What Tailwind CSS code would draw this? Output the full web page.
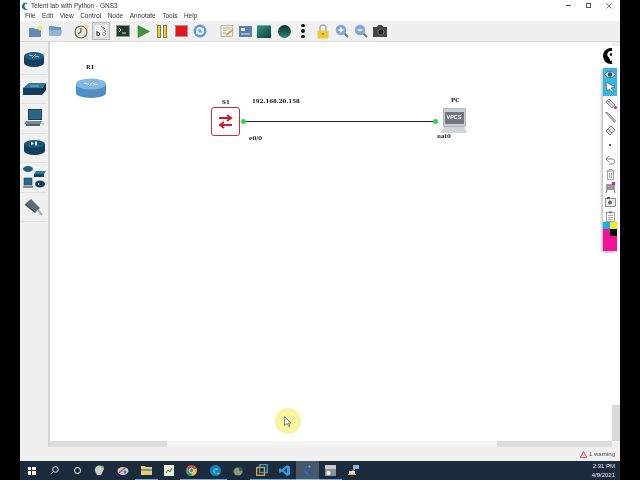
<!DOCTYPE html>
<html lang="en">
<head>
  <meta charset="UTF-8">
  <title>Telent lab with Python - GNS3</title>
  <script src="https://cdn.jsdelivr.net/npm/@tailwindcss/browser@4"></script>
</head>
<body class="w-[640px] h-[480px] overflow-hidden bg-black font-['Liberation_Sans',sans-serif]">
<div class="ml-[20px] w-[600px] h-[480px] flex flex-col bg-[#f0f0f0] relative blur-[0.35px]">

  <!-- title bar -->
  <div class="h-[11px] bg-white flex items-center text-[6.5px] text-[#333]">
    <svg class="ml-[1px] mt-[1px]" width="8" height="9" viewBox="0 0 8 9"><path d="M6 1 A3.6 3.6 0 1 0 7 7 A3 3 0 0 1 6 1Z" fill="#2b5f9e"/><circle cx="5.5" cy="1.5" r="1" fill="#58a0d8"/></svg>
    <span class="ml-[2px]">Telent lab with Python - GNS3</span>
    <div class="ml-auto flex items-center gap-[15px] pr-[8px] text-[#444]">
      <div class="w-[5px] h-px bg-[#555]"></div>
      <div class="w-[5px] h-[5px] border border-[#555]"></div>
      <svg width="6" height="6" viewBox="0 0 6 6"><path d="M0.5 0.5 L5.5 5.5 M5.5 0.5 L0.5 5.5" stroke="#555" stroke-width="0.8"/></svg>
    </div>
  </div>

  <!-- menu -->
  <div class="h-[10px] bg-white flex items-center text-[6.5px] text-[#333] pl-[5px] gap-[6.5px]">
    <span>File</span><span>Edit</span><span>View</span><span>Control</span><span>Node</span><span>Annotate</span><span>Tools</span><span>Help</span>
  </div>

  <!-- toolbar -->
  <div class="h-[21px] bg-[#f0f0f0] border-b border-[#d8d8d8] flex items-center pl-[6px]">
    <div class="w-[18px] h-[18px] flex items-center justify-center">
      <svg width="15" height="13" viewBox="0 0 15 13"><path d="M1 3h5l1 1h6v8H1z" fill="#5f8db8"/><circle cx="12" cy="3" r="2.4" fill="#f3e26a"/></svg>
    </div>
    <div class="w-[18px] h-[18px] flex items-center justify-center ml-[2px]">
      <svg width="15" height="12" viewBox="0 0 15 12"><path d="M1 1h5l1 1h6v9H1z" fill="#6a95bd"/><path d="M1 5h13l-1 6H1z" fill="#8fb4d6"/></svg>
    </div>
    <div class="w-[18px] h-[18px] flex items-center justify-center ml-[8px]">
      <svg width="15" height="15" viewBox="0 0 15 15"><circle cx="7" cy="8" r="6" fill="#e8e4d2" stroke="#666" stroke-width="1.2"/><path d="M7 4v4l-3 2" fill="none" stroke="#333" stroke-width="1"/><circle cx="12.5" cy="2.5" r="2" fill="#f3e26a"/></svg>
    </div>
    <div class="w-[18px] h-[18px] flex items-center justify-center ml-[2px] bg-[#dcdcdc] border border-[#bbb]">
      <svg width="14" height="14" viewBox="0 0 14 14"><rect x="1" y="1" width="12" height="12" fill="#f2f2f2"/><text x="2" y="12" font-size="7" font-weight="bold" fill="#222">b</text><path d="M7 2l5 6M9 3l2 2" stroke="#777" stroke-width="1"/><circle cx="10" cy="10" r="1.5" fill="none" stroke="#777" stroke-width="0.7"/></svg>
    </div>
    <div class="w-[18px] h-[18px] flex items-center justify-center ml-[4px]">
      <svg width="14" height="12" viewBox="0 0 14 12"><rect x="0.5" y="0.5" width="13" height="11" fill="#1d3a2a" stroke="#8a9a8a"/><path d="M3 3l2 2-2 2M6 8h4" stroke="#fff" stroke-width="0.9" fill="none"/></svg>
    </div>
    <div class="w-[18px] h-[18px] flex items-center justify-center ml-[2px]">
      <svg width="13" height="13" viewBox="0 0 13 13"><path d="M1 0.5 L12.5 6.5 L1 12.5Z" fill="#3d9a3a" stroke="#2b7a30" stroke-width="0.6"/></svg>
    </div>
    <div class="w-[18px] h-[18px] flex items-center justify-center ml-[1px] gap-[2px]">
      <div class="w-[4px] h-[13px] bg-[#f2d40c] border border-[#777]"></div>
      <div class="w-[4px] h-[13px] bg-[#f2d40c] border border-[#777]"></div>
    </div>
    <div class="w-[18px] h-[18px] flex items-center justify-center ml-[1px]">
      <div class="w-[13px] h-[12px] bg-[#e8141c] border border-[#999]"></div>
    </div>
    <div class="w-[18px] h-[18px] flex items-center justify-center ml-[1px]">
      <svg width="14" height="14" viewBox="0 0 14 14"><circle cx="7" cy="7" r="6.5" fill="#5b9bd5"/><path d="M3 6a4 4 0 0 1 7-1.5l1-1v4H7.5l1.2-1.2A2.5 2.5 0 0 0 4.5 6.5zM11 8a4 4 0 0 1-7 1.5l-1 1v-4h3.5L5.3 7.7A2.5 2.5 0 0 0 9.5 7.5z" fill="#eef6fc"/></svg>
    </div>
    <div class="w-[18px] h-[18px] flex items-center justify-center ml-[9px]">
      <svg width="14" height="14" viewBox="0 0 14 14"><rect x="1" y="1.5" width="11.5" height="11" fill="#f4f0e0" stroke="#999" stroke-width="0.7"/><path d="M3 4h8M3 6.5h4M3 9h3" stroke="#888" stroke-width="0.7"/><path d="M6 11l7-5" stroke="#d89a3c" stroke-width="1.6"/></svg>
    </div>
    <div class="w-[18px] h-[18px] flex items-center justify-center">
      <svg width="13" height="11" viewBox="0 0 13 11"><rect width="13" height="11" fill="#5a7fa8"/><rect x="2" y="2" width="4" height="3" fill="#e8eef4"/><path d="M2 8h9" stroke="#dfe8f0"/></svg>
    </div>
    <div class="w-[18px] h-[18px] flex items-center justify-center ml-[1px]">
      <div class="w-[14px] h-[13px] bg-gradient-to-br from-[#2e9a86] to-[#123f3a] border-t border-[#66b5a5]"></div>
    </div>
    <div class="w-[18px] h-[18px] flex items-center justify-center ml-[2px]">
      <div class="w-[13px] h-[13px] rounded-full bg-gradient-to-b from-[#0f2e2c] to-[#2a8a78]"></div>
    </div>
    <div class="w-[18px] h-[18px] flex flex-col items-center justify-center gap-[2px] ml-[1px]">
      <div class="w-[3.5px] h-[3.5px] rounded-full bg-[#111]"></div>
      <div class="w-[3.5px] h-[3.5px] rounded-full bg-[#111]"></div>
      <div class="w-[3.5px] h-[3.5px] rounded-full bg-[#111]"></div>
    </div>
    <div class="w-[18px] h-[18px] flex items-center justify-center ml-[2px]">
      <svg width="12" height="15" viewBox="0 0 12 15"><path d="M3 7V4a3 3 0 0 1 6 0v3" fill="none" stroke="#aaa" stroke-width="1.4"/><rect x="0.5" y="6.5" width="11" height="8" fill="#eecb3a"/><circle cx="6" cy="10" r="1.1" fill="#a5851c"/></svg>
    </div>
    <div class="w-[18px] h-[18px] flex items-center justify-center ml-[1px]">
      <svg width="14" height="14" viewBox="0 0 14 14"><path d="M9 9l4 4" stroke="#777" stroke-width="2"/><circle cx="6" cy="6" r="5.3" fill="#7fa8d8"/><path d="M3.5 6h5M6 3.5v5" stroke="#fff" stroke-width="1.4"/></svg>
    </div>
    <div class="w-[18px] h-[18px] flex items-center justify-center ml-[1px]">
      <svg width="14" height="14" viewBox="0 0 14 14"><path d="M9 9l4 4" stroke="#777" stroke-width="2"/><circle cx="6" cy="6" r="5.3" fill="#7fa8d8"/><path d="M3.5 6h5" stroke="#fff" stroke-width="1.4"/></svg>
    </div>
    <div class="w-[18px] h-[18px] flex items-center justify-center ml-[1px]">
      <svg width="14" height="12" viewBox="0 0 14 12"><path d="M4 2l1-2h4l1 2h4v10H0V2z" fill="#444"/><circle cx="8" cy="7" r="3" fill="#222" stroke="#888" stroke-width="0.7"/></svg>
    </div>
  </div>

  <!-- main area -->
  <div class="flex-1 flex min-h-0">
    <!-- device dock -->
    <div class="w-[30px] bg-[#f0f0f0] border-r-[2px] border-[#d4d4d4] flex flex-col items-center pt-[3px]">
      <div class="w-[26px] h-[29.5px] flex items-center justify-center border-b border-[#e0e0e0]">
        <svg width="20" height="15" viewBox="0 0 20 15"><path d="M0 4v7a10 4 0 0 0 20 0V4z" fill="#123f5c"/><ellipse cx="10" cy="4" rx="10" ry="4" fill="#1f5f82"/><path d="M5 3l4 1M15 5l-4-1M12 2l-2 2M8 6l2-2" stroke="#dceaf2" stroke-width="0.8"/></svg>
      </div>
      <div class="w-[26px] h-[29.5px] flex items-center justify-center border-b border-[#e0e0e0]">
        <svg width="23" height="12" viewBox="0 0 23 12"><path d="M0 5h19v7H0z" fill="#123f5c"/><path d="M19 5l4-5v7l-4 5z" fill="#0e3249"/><path d="M0 5l6-5h17l-4 5z" fill="#2f7a9a"/><path d="M7 3h9" stroke="#cfe3ec" stroke-width="0.6"/></svg>
      </div>
      <div class="w-[26px] h-[29.5px] flex items-center justify-center border-b border-[#e0e0e0]">
        <svg width="22" height="18" viewBox="0 0 22 18"><rect x="5" y="0" width="14" height="11" fill="#1b3f58"/><rect x="6" y="1" width="12" height="9" fill="#2d6788"/><path d="M3 12h16l-1 3H1z" fill="#808a92"/><path d="M3 15h14v2H3z" fill="#55606a"/><circle cx="20" cy="15" r="1.5" fill="#ccd"/></svg>
      </div>
      <div class="w-[26px] h-[29.5px] flex items-center justify-center border-b border-[#e0e0e0]">
        <svg width="21" height="15" viewBox="0 0 21 15"><path d="M0 4v7a10.500 4 0 0 0 21 0V4z" fill="#123f5c"/><ellipse cx="10.500" cy="4" rx="10.500" ry="4" fill="#1a5878"/><path d="M7 1.500l3 2-3 2zM11 1.500h2v4h-2z" fill="#eef4f8"/></svg>
      </div>
      <div class="w-[26px] h-[29.5px] flex items-center justify-center border-b border-[#e0e0e0]">
        <svg width="23" height="24" viewBox="0 0 23 24"><ellipse cx="5" cy="4" rx="5" ry="3" fill="#1f5f82"/><path d="M11 9h10l2-3H13z" fill="#2f7a9a"/><path d="M11 9h10v3H11z" fill="#123f5c"/><rect x="1" y="13" width="8" height="7" fill="#2d6788" stroke="#1b3f58" stroke-width="0.6"/><path d="M0 21h10v2H0z" fill="#808a92"/><ellipse cx="17" cy="19" rx="5" ry="3.500" fill="#123f5c"/><path d="M15 18l2 1-2 1z" fill="#fff"/></svg>
      </div>
      <div class="w-[26px] h-[29.5px] flex items-center justify-center border-b border-[#e0e0e0]">
        <svg width="18" height="18" viewBox="0 0 18 18"><path d="M1 5L6 1l9 9-4 4z" fill="#5f6a74"/><path d="M1 5l10 9-1 1L0 7z" fill="#3c444c"/><path d="M13 12l4 5" stroke="#9aa2aa" stroke-width="2"/></svg>
      </div>
    </div>

    <div class="flex-1 flex flex-col min-w-0">
      <div class="flex-1 flex min-h-0">
        <!-- canvas -->
        <div class="flex-1 bg-white relative overflow-hidden">
          <!-- R1: offsets are from the canvas origin at 50,42 -->
          <div class="absolute left-[36px] top-[21px] text-[5.5px] font-bold font-['DejaVu_Serif',serif] text-[#111]">R1</div>
          <svg class="absolute left-[25px] top-[36px]" width="32" height="20" viewBox="0 0 32 20"><path d="M1 5v10a15 5 0 0 0 30 0V5z" fill="#4f8fc4"/><ellipse cx="16" cy="6" rx="15" ry="5.500" fill="#85b8e0"/><path d="M9 5l5 1.500M23 7l-5-1.500M19 3l-3 3M13 9l3-3" stroke="#e6f2fb" stroke-width="0.9"/></svg>

          <!-- S1 and link -->
          <div class="absolute left-[172px] top-[56px] text-[5.5px] font-bold font-['DejaVu_Serif',serif] text-[#111]">S1</div>
          <div class="absolute left-[202px] top-[55px] text-[5.5px] font-bold font-['DejaVu_Serif',serif] text-[#111]">192.168.20.158</div>
          <div class="absolute left-[161px] top-[65px] w-[29px] h-[29px] border-[1.5px] border-[#c0313a] rounded-[3px] bg-white flex items-center justify-center">
            <svg width="19" height="15" viewBox="0 0 19 15"><path d="M3 4h11M11 1l4 3-4 3M16 11H5M8 8l-4 3 4 3" fill="none" stroke="#c8202c" stroke-width="2"/></svg>
          </div>
          <div class="absolute left-[192px] top-[79px] w-[196px] h-px bg-[#222]"></div>
          <div class="absolute left-[190.500px] top-[77px] w-[5px] h-[5px] rounded-full bg-[#22dd44]"></div>
          <div class="absolute left-[199px] top-[92px] text-[5.5px] font-bold font-['DejaVu_Serif',serif] text-[#222]">e0/0</div>

          <!-- PC -->
          <div class="absolute left-[401px] top-[54px] text-[5.5px] font-bold font-['DejaVu_Serif',serif] text-[#111]">PC</div>
          <div class="absolute left-[390px] top-[66px] w-[28px] h-[28px] flex flex-col items-center">
            <div class="w-[23px] h-[19px] bg-[#c9ced2] border border-[#b0b5b8] rounded-[1px] flex items-center justify-center">
              <div class="w-[19px] h-[12px] bg-[#71777c] text-white text-[5.5px] font-bold flex items-center justify-center">VPCS</div>
            </div>
            <div class="w-[28px] h-[6px] bg-[#d2d5d8] [clip-path:polygon(15%_0,85%_0,100%_100%,0_100%)]"></div>
          </div>
          <div class="absolute left-[383px] top-[77px] w-[5px] h-[5px] rounded-full bg-[#22dd44]"></div>
          <div class="absolute left-[387px] top-[90px] text-[5.5px] font-bold font-['DejaVu_Serif',serif] text-[#222]">nat0</div>

          <!-- drawing palette -->
          <div class="absolute left-[553px] top-[6px] w-[16px] h-[16px] rounded-full bg-black flex items-center justify-center">
            <svg width="10" height="12" viewBox="0 0 10 12"><path d="M5 1a3.500 3.500 0 0 1 2 6.500L5.500 11h-1L3 7.500A3.500 3.500 0 0 1 5 1z" fill="#fff"/><circle cx="5" cy="4.500" r="1.300" fill="#000"/></svg>
          </div>
        </div>
        <!-- vertical scrollbar -->
        <div class="w-[8px] flex flex-col">
          <div class="h-[4px] bg-[#f0f0f0]"></div>
          <div class="flex-1 bg-white"></div>
          <div class="h-[36px] bg-[#d8d8d8]"></div>
        </div>
      </div>
      <!-- horizontal scrollbar -->
      <div class="h-[6px] flex mr-[8px]">
        <div class="w-[117px] bg-[#dcdcdc]"></div>
        <div class="w-[330px] bg-[#f4f4f4]"></div>
        <div class="flex-1 bg-[#dcdcdc]"></div>
      </div>
    </div>
  </div>

  <!-- status bar -->
  <div class="h-[14px] bg-[#f0f0f0] flex items-center justify-end pr-[5px] gap-[2px] text-[6px] text-[#444]">
    <svg width="7" height="7" viewBox="0 0 7 7"><path d="M3.500 0.500L6.800 6.500H0.200Z" fill="#f4d7d7" stroke="#b83a3a" stroke-width="0.8"/></svg>
    <span>1 warning</span>
  </div>

  <!-- taskbar -->
  <div class="h-[19px] bg-[#1b2b3c] flex items-center pl-[0px] text-white">
    <div class="w-[23px] ml-[0px] h-full flex items-center justify-center">
      <div class="grid grid-cols-2 gap-px w-[8px] h-[8px]"><div class="bg-white"></div><div class="bg-white"></div><div class="bg-white"></div><div class="bg-white"></div></div>
    </div>
    <div class="w-[23px] h-full flex items-center justify-center">
      <svg width="9" height="9" viewBox="0 0 9 9"><circle cx="5.500" cy="3.500" r="2.800" fill="none" stroke="#eee" stroke-width="0.9"/><path d="M3.500 5.500L0.800 8.200" stroke="#eee"/></svg>
    </div>
    <div class="w-[22px] h-full flex items-center justify-center">
      <div class="w-[7px] h-[7px] rounded-full border border-white"></div>
    </div>
    <div class="w-[23px] h-full flex items-center justify-center">
      <svg width="11" height="11" viewBox="0 0 11 11"><path d="M1 6a4.500 4.500 0 0 1 9-2l-3 6H3z" fill="#c8d0c8"/><circle cx="8.500" cy="2" r="1.300" fill="#7fb04f"/></svg>
    </div>
    <div class="w-[24px] h-full flex items-center justify-center">
      <svg width="12" height="11" viewBox="0 0 12 11"><ellipse cx="6" cy="6" rx="5.500" ry="4" fill="#c8d0dc"/><path d="M2 8l7-6" stroke="#c84a4a" stroke-width="1.500"/><circle cx="8" cy="7" r="1.500" fill="#4a78b8"/></svg>
    </div>
    <div class="w-[23px] h-full flex items-center justify-center border-b-[1px] border-[#6fa8d8]">
      <svg width="11" height="9" viewBox="0 0 11 9"><path d="M0 0h4l1 1h6v8H0z" fill="#f2cc5c"/><path d="M0 3h11v2H0z" fill="#5a9fd0"/></svg>
    </div>
    <div class="w-[22px] h-full flex items-center justify-center">
      <svg width="10" height="11" viewBox="0 0 10 11"><rect width="10" height="11" fill="#e8f0d8"/><path d="M2 8l2-3 2 2 2-4" stroke="#3c8a3c" fill="none"/></svg>
    </div>
    <div class="w-[23px] h-full flex items-center justify-center border-b-[1px] border-[#6fa8d8]">
      <svg width="11" height="11" viewBox="0 0 11 11"><circle cx="5.500" cy="5.500" r="5.500" fill="#dd4b3e"/><path d="M5.500 5.500L10.500 3.500A5.500 5.500 0 0 1 5.500 11z" fill="#f4c430"/><path d="M5.500 5.500L5.500 11A5.500 5.500 0 0 1 0.700 3z" fill="#3aa757"/><circle cx="5.500" cy="5.500" r="2.300" fill="#4a8ce8" stroke="#fff" stroke-width="0.700"/></svg>
    </div>
    <div class="w-[24px] h-full flex items-center justify-center border-b-[1px] border-[#6fa8d8]">
      <svg width="11" height="11" viewBox="0 0 11 11"><circle cx="5.500" cy="5.500" r="5.500" fill="#1483c8"/><path d="M3 6.500a3 3 0 0 1 5.500-1.500H5a2 2 0 0 0 3.500 2.500l1.500 1A5 5 0 0 1 3 6.500z" fill="#5fd88f"/></svg>
    </div>
    <div class="w-[23px] h-full flex items-center justify-center">
      <svg width="11" height="10" viewBox="0 0 11 10"><ellipse cx="5" cy="5.500" rx="4.500" ry="4" fill="#8a9a7a"/><circle cx="7.500" cy="3" r="2" fill="#3c5a3c"/></svg>
    </div>
    <div class="w-[23px] h-full flex items-center justify-center border-b-[1px] border-[#6fa8d8]">
      <svg width="12" height="12" viewBox="0 0 12 12"><rect x="3.500" y="0.700" width="7.800" height="7.800" fill="none" stroke="#2e9ad0" stroke-width="1.400"/><rect x="0.700" y="3.500" width="7.800" height="7.800" fill="none" stroke="#e89a2c" stroke-width="1.400"/></svg>
    </div>
    <div class="w-[23px] h-full flex items-center justify-center border-b-[1px] border-[#6fa8d8]">
      <svg width="11" height="11" viewBox="0 0 11 11"><path d="M8 0l3 1.500v8L8 11 3 6.500 1 8 0 7.300V3.700L1 3l2 1.500zM8 3L5 5.500 8 8z" fill="#2f9be8"/></svg>
    </div>
    <div class="w-[23px] h-full flex items-center justify-center bg-[#46586a] border-b-[1px] border-[#8fc0e8]">
      <svg width="9" height="11" viewBox="0 0 9 11"><path d="M7 1A4.500 4.500 0 1 0 8 9 3.600 3.600 0 0 1 7 1z" fill="#2d6ac0"/><circle cx="6.500" cy="1.500" r="1" fill="#7fb8e8"/></svg>
    </div>
    <div class="w-[23px] h-full flex items-center justify-center border-b-[1px] border-[#6fa8d8]">
      <svg width="11" height="11" viewBox="0 0 11 11"><rect width="11" height="4" fill="#c8ccd0"/><rect y="4" width="11" height="7" fill="#8a9298"/><circle cx="3.500" cy="8" r="2.200" fill="#f0f0f0"/></svg>
    </div>
    <div class="w-[23px] h-full flex items-center justify-center">
      <svg width="11" height="11" viewBox="0 0 11 11"><rect x="5" y="0" width="6" height="4" fill="#8fb0d8"/><rect x="1" y="6" width="6" height="3" fill="#d8d8d8"/><path d="M0 9.500h8" stroke="#d8a040"/><path d="M7 4L4 6" stroke="#ccc"/></svg>
    </div>
    <div class="ml-auto pr-[5px] text-[6px] leading-[9px] text-right text-[#e6ebf0]">
      <div>2:31 PM</div>
      <div>4/9/2021</div>
    </div>
  </div>

  <!-- vertical drawing palette, over the canvas -->
  <div class="absolute left-[583px] top-[68px] w-[14px] h-[183px] bg-white shadow-[-1px_1px_3px_rgba(0,0,0,0.35)] flex flex-col items-center">
    <div class="w-full h-[28px] bg-[#35b6e3] flex flex-col items-center pt-[2px] gap-[2px]">
      <svg width="12" height="9" viewBox="0 0 12 9"><path d="M0.500 4.500Q6 -2 11.500 4.500Q6 11 0.500 4.500Z" fill="#dfeef5" stroke="#444" stroke-width="0.700"/><circle cx="6" cy="4.500" r="2.200" fill="#445"/></svg>
      <svg width="11" height="12" viewBox="0 0 11 12"><path d="M1 1L10 6L6 7L9 11L7.500 12L4.500 8L2 10Z" fill="#fff" stroke="#444" stroke-width="0.600"/></svg>
    </div>
    <div class="h-[15px] w-full flex items-center justify-center relative">
      <svg width="11" height="11" viewBox="0 0 11 11"><path d="M1 4L4 1l6 6-3 3z" fill="#ddd" stroke="#555" stroke-width="0.700"/><path d="M3 3l5 5M2.500 5l4-3" stroke="#777" stroke-width="0.500"/></svg>
      <div class="absolute right-[0px] bottom-[2px] w-[3px] h-[3px] rounded-full bg-[#e6147f]"></div>
    </div>
    <div class="h-[13px] w-full flex items-center justify-center">
      <svg width="11" height="11" viewBox="0 0 11 11"><path d="M0.500 0.500L2 0l8.500 8.500-1 2z" fill="#bbb" stroke="#666" stroke-width="0.600"/></svg>
    </div>
    <div class="h-[13px] w-full flex items-center justify-center">
      <svg width="11" height="11" viewBox="0 0 11 11"><path d="M1 6l5-5 4 4-5 5z" fill="#ddd" stroke="#555" stroke-width="0.700"/><path d="M3 4l4 4" stroke="#555" stroke-width="0.700"/></svg>
    </div>
    <div class="h-[16px] w-full flex items-center justify-center">
      <div class="w-[2px] h-[2px] rounded-full bg-[#222]"></div>
    </div>
    <div class="h-[14px] w-full flex items-center justify-center">
      <svg width="11" height="10" viewBox="0 0 11 10"><path d="M4 1L1 4l3 3M1 4h6a2.500 2.500 0 0 1 0 5H4" fill="none" stroke="#777" stroke-width="0.900"/></svg>
    </div>
    <div class="h-[14px] w-full flex items-center justify-center">
      <svg width="9" height="11" viewBox="0 0 9 11"><path d="M0.500 2h8M3 2V0.500h3V2M1.500 2v8.500h6V2M3.500 4v5M5.500 4v5" fill="none" stroke="#777" stroke-width="0.700"/></svg>
    </div>
    <div class="h-[14px] w-full flex items-center justify-center relative">
      <svg width="11" height="11" viewBox="0 0 11 11"><path d="M1 1h9v6H1z" fill="#999"/><path d="M2 7L1 10M9 7l1 3" stroke="#777"/></svg>
      <div class="absolute right-[2px] top-[1px] w-[3px] h-[3px] bg-[#e6147f]"></div>
    </div>
    <div class="h-[14px] w-full flex items-center justify-center">
      <svg width="11" height="10" viewBox="0 0 11 10"><rect x="0.500" y="1.500" width="10" height="8" fill="#eee" stroke="#666" stroke-width="0.700"/><circle cx="5" cy="5.500" r="2" fill="#666"/><rect x="2" y="0" width="3" height="2" fill="#555"/></svg>
    </div>
    <div class="h-[14px] w-full flex items-center justify-center">
      <svg width="9" height="11" viewBox="0 0 9 11"><rect x="0.500" y="1.500" width="8" height="9" fill="none" stroke="#777" stroke-width="0.700"/><rect x="3" y="0.300" width="3" height="2" fill="#777"/><path d="M2 4.500h5M2 6.500h5M2 8.500h5" stroke="#777" stroke-width="0.600"/></svg>
    </div>
    <div class="w-full flex-1 bg-[#f0129a] grid grid-cols-2 grid-rows-[7px_7px_1fr] mt-[-1px]">
      <div class="bg-[#18b0e8]"></div>
      <div class="bg-[#f6e81c]"></div>
      <div></div>
      <div class="bg-black"></div>
    </div>
  </div>

  <!-- mouse highlight -->
  <div class="absolute left-[255px] top-[408px] w-[26px] h-[26px] rounded-full bg-[#f7f5a0] flex items-center justify-center">
    <svg width="8" height="11" viewBox="0 0 8 11"><path d="M0.500 0.500L7 7H4.500L6 10L4.800 10.500L3.300 7.500L0.500 9.500Z" fill="#fff" stroke="#333" stroke-width="0.600"/></svg>
  </div>
</div>
</body>
</html>
